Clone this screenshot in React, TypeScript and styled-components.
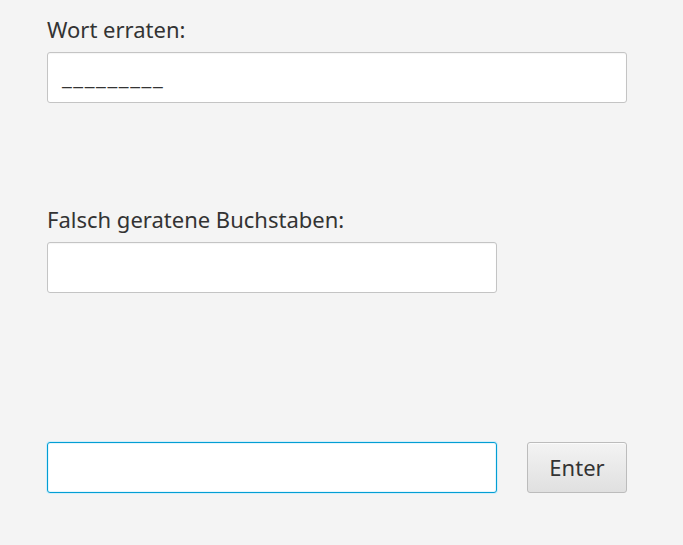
import React from "react";
import styled, { createGlobalStyle } from "styled-components";

const Global = createGlobalStyle`
  html, body {
    margin: 0;
    padding: 0;
    background: #f4f4f4;
  }
  body {
    font-family: "Noto Sans", "Open Sans", sans-serif;
    color: #333333;
  }
`;

const Page = styled.div`
  width: 683px;
  height: 545px;
  box-sizing: border-box;
  padding: 14px 0 0 47px;
  display: flex;
  flex-direction: column;
  background: #f4f4f4;
`;

const Section = styled.div<{ $mt?: number }>`
  display: flex;
  flex-direction: column;
  gap: 8px;
  margin-top: ${(p) => p.$mt ?? 0}px;
`;

const Label = styled.div`
  font-size: 22px;
  line-height: 30px;
  height: 30px;
  color: #333333;
`;

const Field = styled.div<{ $w: number; $focused?: boolean }>`
  width: ${(p) => p.$w}px;
  height: 51px;
  box-sizing: border-box;
  background: #ffffff;
  border: 1px solid ${(p) => (p.$focused ? "#039ed3" : "#c4c4c4")};
  border-radius: 3px;
  box-shadow: ${(p) =>
    p.$focused
      ? "0 0 0 1px #d2eefa, inset 0 0 0 1px #e6f5fc"
      : "inset 0 1px 1px rgba(0,0,0,0.04)"};
  display: flex;
  align-items: center;
  padding: 0 14px;
  font-size: 22px;
  color: #333333;
`;

const Blanks = styled.span`
  letter-spacing: 1.6px;
  position: relative;
  top: -2px;
`;

const Row = styled.div`
  display: flex;
  align-items: center;
  gap: 30px;
  margin-top: 149px;
`;

const Button = styled.button`
  width: 100px;
  height: 51px;
  box-sizing: border-box;
  border: 1px solid #bcbcbc;
  border-radius: 3px;
  background: linear-gradient(#f3f3f3, #e0e0e0);
  box-shadow: inset 0 1px 0 #fbfbfb;
  font-family: "Noto Sans", "Open Sans", sans-serif;
  font-size: 22px;
  color: #333333;
  padding: 0 0 2px;
  cursor: default;
`;

export default function App() {
  return (
    <>
      <Global />
      <Page>
        <Section>
          <Label>Wort erraten:</Label>
          <Field $w={580}>
            <Blanks>_________</Blanks>
          </Field>
        </Section>
        <Section $mt={101}>
          <Label>Falsch geratene Buchstaben:</Label>
          <Field $w={450} />
        </Section>
        <Row>
          <Field $w={450} $focused />
          <Button>Enter</Button>
        </Row>
      </Page>
    </>
  );
}
